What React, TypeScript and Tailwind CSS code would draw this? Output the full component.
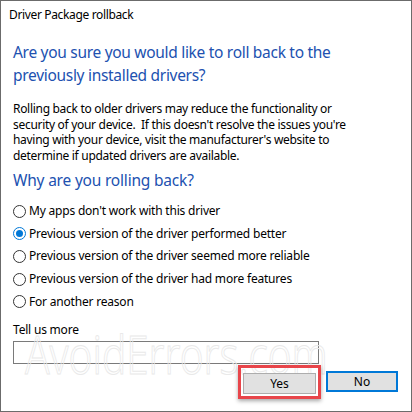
const reasons = [
  "My apps don't work with this driver",
  'Previous version of the driver performed better',
  'Previous version of the driver seemed more reliable',
  'Previous version of the driver had more features',
  'For another reason',
];

function Radio({ checked }: { checked: boolean }) {
  return (
    <span
      className={
        'w-[13px] h-[13px] rounded-full border flex items-center justify-center bg-white shrink-0 ' +
        (checked ? 'border-[#0078d7]' : 'border-[#333333]')
      }
    >
      {checked && <span className="w-[7px] h-[7px] rounded-full bg-[#0078d7]" />}
    </span>
  );
}

export default function App() {
  return (
    <div
      className="relative w-[412px] h-[412px] bg-white border border-[#6b6b6b] overflow-hidden text-[#000000]"
      style={{ fontFamily: '"Noto Sans", "Open Sans", sans-serif' }}
    >
      {/* Title */}
      <div className="pl-[8px] pt-[6px] text-[12px] leading-[16px] tracking-[-0.35px]">Driver Package rollback</div>

      <div className="pl-[12px] pr-[12px]">
        <h1 className="mt-[18px] text-[#2151b0] text-[15.5px] leading-[23px] tracking-[-0.3px]">
          Are you sure you would like to roll back to the
          <br />
          previously installed drivers?
        </h1>

        <p className="mt-[14px] text-[12px] leading-[15.5px] tracking-[-0.3px]">
          Rolling back to older drivers may reduce the functionality or
          <br />
          security of your device.&nbsp; If this doesn't resolve the issues you're
          <br />
          having with your device, visit the manufacturer's website to
          <br />
          determine if updated drivers are available.
        </p>

        <h2 className="mt-[6px] text-[#2151b0] text-[15.5px] leading-[23px] tracking-[-0.2px]">Why are you rolling back?</h2>

        <div className="mt-[8px] flex flex-col">
          {reasons.map((r, i) => (
            <label key={r} className="flex items-center gap-[3px] h-[22.6px] text-[12px] tracking-[-0.2px]">
              <Radio checked={i === 1} />
              <span>{r}</span>
            </label>
          ))}
        </div>

        <div className="mt-[9px] text-[12px] leading-[16px] tracking-[-0.2px]">Tell us more</div>
        <div className="mt-[3px] w-[306px] h-[23px] border border-[#7a7a7a]" />
      </div>

      {/* watermark */}
      <div
        aria-hidden="true"
        className="absolute left-[24px] top-[322px] text-[54px] leading-[60px] font-light text-transparent whitespace-nowrap origin-left scale-x-[0.75] select-none pointer-events-none"
        style={{ WebkitTextStroke: '1px #e9e9e9' }}
      >
        AvoidErrors.com
      </div>

      <div className="absolute right-[13px] bottom-[12px] flex items-center gap-[5px]">
        <div className="p-[2px] border-[3px] border-[#e8454a] shadow-[0_2px_4px_rgba(0,0,0,0.35)]">
          <button className="w-[73px] h-[21px] bg-[#e1e1e1] border border-[#adadad] text-[12px] leading-none">
            Yes
          </button>
        </div>
        <button className="w-[72px] h-[21px] bg-[#e1e1e1] border-2 border-[#0078d7] text-[12px] leading-none">
          No
        </button>
      </div>
    </div>
  );
}
